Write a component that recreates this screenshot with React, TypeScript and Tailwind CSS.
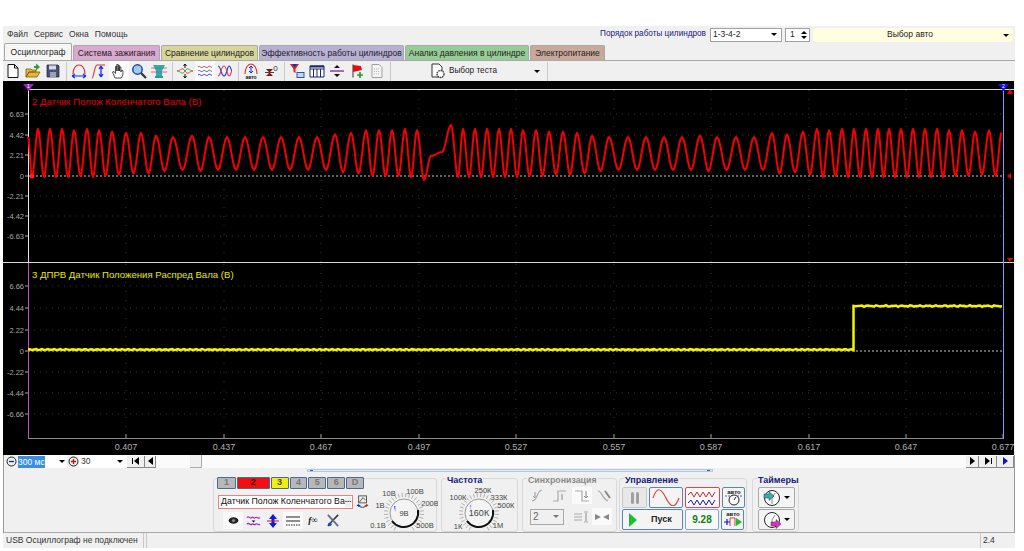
import type { ReactNode } from "react";

const peaks = [38, 50, 62, 74, 87, 99, 112, 126, 141, 156, 173, 192, 209, 227, 245, 263, 281, 299, 317, 335, 351, 366, 379, 392, 405, 417];
const peaks2 = [463, 475, 487, 499, 511, 523, 536, 549, 563, 577, 592, 609, 628, 646, 664, 682, 700, 717, 736, 754, 772, 787, 803, 817, 829, 842, 854, 866, 878, 889, 901, 913, 925, 937, 949, 962, 975, 989, 1002];

const clamp = (v: number) => Math.min(1, Math.max(0, v));

function extremes(list: number[]) {
  const out: [number, number][] = [];
  list.forEach((x, i) => {
    const next = list[i + 1] ?? x + 13;
    const s = clamp((next - x - 12) / 6);
    out.push([x, 129 + s * 8]);
    if (i < list.length - 1) out.push([(x + next) / 2, 177 - s * 7]);
  });
  return out;
}

function redWave() {
  const ext: [number, number][] = [
    [28, 137],
    [32, 177],
    ...extremes(peaks),
    [424, 180],
    [431, 156],
    [442, 152],
    [451, 125],
    [458, 177],
    ...extremes(peaks2),
  ];
  const pts: string[] = [];
  for (let i = 0; i < ext.length - 1; i++) {
    const [x0, y0] = ext[i];
    const [x1, y1] = ext[i + 1];
    for (let k = 0; k < 6; k++) {
      const t = k / 6;
      const y = y0 + (y1 - y0) * (1 - Math.cos(Math.PI * t)) / 2;
      pts.push(`${(x0 + (x1 - x0) * t).toFixed(1)},${y.toFixed(1)}`);
    }
  }
  pts.push("1002,134");
  return pts.join(" ");
}

function yellowWave() {
  const pts: string[] = [];
  for (let x = 28; x <= 853; x += 2) {
    pts.push(`${x},${349.6 + Math.sin(x * 7.3) * 0.5}`);
  }
  pts.push("853.5,350", "853.5,306");
  for (let x = 856; x <= 1002; x += 2) {
    pts.push(`${x},${306 + Math.sin(x * 3.7) * Math.sin(x * 1.3) * 0.9}`);
  }
  return pts.join(" ");
}

const xTicks = [
  [126, "0.407"],
  [224, "0.437"],
  [321, "0.467"],
  [419, "0.497"],
  [516, "0.527"],
  [614, "0.557"],
  [711, "0.587"],
  [809, "0.617"],
  [906, "0.647"],
  [1003, "0.677"],
] as const;

const redTicks = [
  [114, "6.63"],
  [135, "4.42"],
  [155, "2.21"],
  [176, "0"],
  [196, "-2.21"],
  [216, "-4.42"],
  [236, "-6.63"],
] as const;

const yellowTicks = [
  [286, "6.66"],
  [308, "4.44"],
  [330, "2.22"],
  [351, "0"],
  [372, "-2.22"],
  [393, "-4.44"],
  [414, "-6.66"],
] as const;

const Chart = () => (
  <svg width="1011" height="374" viewBox="3 81 1011 374" className="block bg-black shrink-0">
    {/* grid */}
    {xTicks.map(([x]) => (
      <g key={x}>
        <line x1={x} x2={x} y1="90" y2="262" stroke="#3a3a20" strokeDasharray="1 8" />
        <line x1={x} x2={x} y1="264" y2="438" stroke="#3a3a20" strokeDasharray="1 8" />
        <line x1={x} x2={x} y1="434" y2="438" stroke="#999" />
      </g>
    ))}
    {[...redTicks, ...yellowTicks].map(([y, t]) => (
      <g key={`${y}`}>
        {t !== "0" && <line x1="28" x2="1003" y1={y} y2={y} stroke="#3a3a20" strokeDasharray="1 5" />}
        <line x1="25" x2="28" y1={y} y2={y} stroke="#aaa" />
        <text x="24" y={y + 3} textAnchor="end" fontSize="7.5" fill="#a8a8a8">{t}</text>
      </g>
    ))}
    <line x1="28" x2="1003" y1="176" y2="176" stroke="#c8c8c8" strokeDasharray="2 2" />
    <line x1="28" x2="1003" y1="351" y2="351" stroke="#c8c8c8" strokeDasharray="2 2" />
    {/* frames */}
    <line x1="28" x2="1014" y1="89.5" y2="89.5" stroke="#d8d8d8" />
    <line x1="3" x2="1014" y1="262.5" y2="262.5" stroke="#d8d8d8" />
    <line x1="28" x2="1003" y1="438.5" y2="438.5" stroke="#8c8c8c" />
    <line x1="28.5" x2="28.5" y1="89" y2="263" stroke="#e8e8e8" />
    <line x1="28.5" x2="28.5" y1="263" y2="439" stroke="#c050c0" />
    <line x1="1003.5" x2="1003.5" y1="89" y2="439" stroke="#8f8fff" />
    <polygon points="23,84 34,84 28.5,91" fill="#a020c0" />
    <polygon points="998,84 1009,84 1003.5,91" fill="#1010f0" />
    <text x="28.5" y="88" textAnchor="middle" fontSize="5" fill="#fff">1</text>
    <text x="1003.5" y="88" textAnchor="middle" fontSize="5" fill="#fff">2</text>
    <polygon points="1007,94 1013,94 1010,89" fill="#f00000" />
    <polygon points="1007,258 1013,258 1010,262" fill="#f00000" />
    {/* traces */}
    <polyline points={redWave()} fill="none" stroke="#f40000" strokeWidth="2" strokeLinejoin="round" />
    <polyline points={yellowWave()} fill="none" stroke="#f6f200" strokeWidth="2.5" />
    <circle cx="32" cy="176" r="2.5" fill="#ff2020" />
    <polygon points="1007,176 1011,173 1011,179" fill="#f00000" />
    <text x="32" y="105" fontSize="9.6" fill="#e80000">2 Датчик Полож Коленчатого Вала (В)</text>
    <text x="32" y="278" fontSize="9.6" fill="#e8e800">3 ДПРВ Датчик Положения Распред Вала (В)</text>
    {xTicks.map(([x, t]) => (
      <text key={t} x={x} y="450" textAnchor="middle" fontSize="9" fill="#b0b0b0">{t}</text>
    ))}
  </svg>
);

const Ico = ({ children, size = 16 }: { children: ReactNode; size?: number }) => (
  <svg width={size} height={size} viewBox="0 0 16 16" className="block">
    {children}
  </svg>
);

const ToolBtn = ({ children, on }: { children: ReactNode; on?: boolean }) => (
  <div className={`w-[20px] h-[20px] flex items-center justify-center ${on ? "bg-[#fafafa]" : ""}`}>
    {children}
  </div>
);

const Sep = () => <div className="w-px h-[19px] mx-[2.5px] bg-[#c8c8c8]" />;

const Arrow = () => <div className="w-0 h-0 border-l-[3px] border-r-[3px] border-t-[3px] border-l-transparent border-r-transparent border-t-black" />;

const Toolbar = () => (
  <div className="h-[21px] flex items-center border-t border-[#a8a8a8]">
    <ToolBtn><Ico><path d="M3 1.5h6.5l3.5 3.5v9.5H3z M9.5 1.5V5H13" fill="#fff" stroke="#111" /></Ico></ToolBtn>
    <ToolBtn><Ico><path d="M1 14V6h5l1 1h4v2H4l-3 5zM1 14l3-5h11l-3 5z" fill="#e8b830" stroke="#7a5a10" strokeWidth=".8" /><path d="M9 6V3h2V0.5L15 4l-4 3.5V5H9z" fill="#2ca02c" /></Ico></ToolBtn>
    <ToolBtn><Ico><path d="M2 2h11l1 1v11H2z" fill="#46507a" stroke="#222" strokeWidth=".7" /><rect x="4" y="2.5" width="7" height="4" fill="#d8d8e8" /><rect x="5" y="9" width="6" height="5" fill="#9aa0b8" /></Ico></ToolBtn>
    <Sep />
    <ToolBtn><Ico><path d="M2 11C2 5 5 2 8 2s6 3 6 9" fill="none" stroke="#e03030" strokeWidth="1.2" /><path d="M1 13h14M1 13l3-2M1 13l3 2M15 13l-3-2M15 13l-3 2" stroke="#1030e0" strokeWidth="1.2" fill="none" /></Ico></ToolBtn>
    <ToolBtn><Ico><path d="M1 15C3 15 3 3 6 2h8" fill="none" stroke="#e03030" strokeWidth="1.1" /><path d="M10 3v11M10 3L8 6M10 3l2 3M10 14l-2-3M10 14l2-3" stroke="#1030e0" strokeWidth="1.3" fill="none" /></Ico></ToolBtn>
    <ToolBtn on><Ico><path d="M4 15L1.5 9l1.5-.5 1.5 2V3.5h1.3V8V1.5h1.4V8V2.5h1.4V8V4h1.3v5l.6-1.5h1.3c.5 2 0 5-1.4 7.5z" fill="#fff" stroke="#222" strokeWidth=".8" /></Ico></ToolBtn>
    <ToolBtn><Ico><circle cx="6.5" cy="6.5" r="4.7" fill="#a8c8e8" stroke="#1850a0" strokeWidth="1.5" /><path d="M10 10l5 5" stroke="#333" strokeWidth="2.2" /></Ico></ToolBtn>
    <ToolBtn><Ico><path d="M2 2h12l-3 6v5H5V8z" fill="#18b8b0" /><path d="M0 5h16M0 9h16" stroke="#e04060" strokeWidth=".8" /><path d="M4 14h8" stroke="#0a6a90" strokeWidth="1.5" /></Ico></ToolBtn>
    <Sep />
    <ToolBtn><Ico><path d="M0 8C4 8 5 3 8 8s4 0 8 0" fill="none" stroke="#e04040" /><path d="M0 8c4 0 5 5 8 0s4 0 8 0" fill="none" stroke="#30b030" /><path d="M8 1v4M8 11v4M6.5 3L8 1l1.500 2M6.500 13L8 15l1.500-2" stroke="#111" fill="none" /></Ico></ToolBtn>
    <ToolBtn on><Ico><path d="M1 4c2-2 3 2 5 0s3 2 5 0 3 1 4 0" fill="none" stroke="#e03030" /><path d="M1 8c2-2 3 2 5 0s3 2 5 0 3 1 4 0" fill="none" stroke="#3060d0" /><path d="M1 12c2-2 3 2 5 0s3 2 5 0 3 1 4 0" fill="none" stroke="#3030d0" /></Ico></ToolBtn>
    <ToolBtn><Ico><path d="M1 3c3 0 3 10 6 10s3-10 5-10 2 5 3 5" fill="none" stroke="#2040c0" strokeWidth="1.1" /><path d="M1 13c3 0 3-10 6-10s3 10 5 10 2-5 3-5" fill="none" stroke="#d04060" strokeWidth="1.1" /></Ico></ToolBtn>
    <Sep />
    <ToolBtn><Ico><path d="M2 11C2 5 5 1 8 1s6 4 6 10" fill="none" stroke="#e03030" strokeWidth="1.1" /><path d="M8 3v7M8 3L6 5M8 3l2 2M8 10L6 8M8 10l2-2" stroke="#1030e0" fill="none" /><text x="8" y="15.500" textAnchor="middle" fontSize="5" fontWeight="700" fill="#111">авто</text></Ico></ToolBtn>
    <ToolBtn><Ico><path d="M3 6h7l-3.500 3.500zM3 13h7L6.500 9.500z" fill="#8a1010" /><path d="M2 9.500h9" stroke="#444" /><text x="12.500" y="8" textAnchor="middle" fontSize="8" fill="#333">0</text></Ico></ToolBtn>
    <Sep />
    <ToolBtn><Ico><path d="M1 1h9L6.500 6v4L4.500 9V6z" fill="#e02020" /><path d="M3 1h5L6 4z" fill="#1030c0" /><rect x="8" y="9.500" width="7" height="5" fill="#c8d8f0" stroke="#3050c0" /></Ico></ToolBtn>
    <ToolBtn><Ico><path d="M1 3h14v11H1z M1 6h14M4.500 6v8M8 6v8M11.500 6v8" fill="#fff" stroke="#1a2a60" strokeWidth="1" /><rect x="1" y="2.500" width="14" height="2" fill="#1a2a60" /></Ico></ToolBtn>
    <ToolBtn><Ico><path d="M1 8h14" stroke="#8020a0" strokeWidth="1.3" /><path d="M5 5h6L8 2zM5 11h6l-3 3z" fill="#111" /></Ico></ToolBtn>
    <ToolBtn><Ico><path d="M4 1.500v13" stroke="#333" /><path d="M4 2l8 1 1 4-9 2z" fill="#e01010" /><path d="M11 9v6M8 12h6" stroke="#20a030" strokeWidth="1.700" /></Ico></ToolBtn>
    <ToolBtn><Ico><path d="M3 1.500h7l3 3v10H3z" fill="#f4f4f4" stroke="#a0a0a0" /><path d="M5 6h6M5 8.500h6M5 11h6" stroke="#b8b8b8" strokeDasharray="1 1" /></Ico></ToolBtn>
    <Sep />
    <div className="w-[100px] h-[20px] flex items-center ml-[37px]">
      <Ico size={16}><path d="M2 1h7l3 3v10H2z" fill="#fff" stroke="#333" /><circle cx="10.500" cy="11" r="3.500" fill="#fff" stroke="#333" strokeWidth="1.400" strokeDasharray="1.500 .8" /></Ico>
      <span className="ml-[3px] text-[8.2px] text-[#222]">Выбор теста</span>
    </div>
    <div className="w-[14px] flex justify-center"><Arrow /></div>
    <div className="w-px h-[19px] ml-[3px] bg-[#c8c8c8]" />
  </div>
);

const Select = ({ children, w, className = "" }: { children: ReactNode; w: string; className?: string }) => (
  <div className={`${w} ${className} h-[14px] flex items-center justify-between px-[2px] bg-white border border-[#a0a0a0] text-[8.5px] text-[#222]`}>
    {children}
  </div>
);

const TopBar = () => (
  <div className="h-[17px] flex items-center text-[8.5px] text-[#333]">
    <div className="flex gap-[6px] ml-[4px] w-[593px]">
      <span>Файл</span>
      <span>Сервис</span>
      <span>Окна</span>
      <span>Помощь</span>
    </div>
    <span className="w-[110px] text-[#1a1a80] text-[8.2px] whitespace-nowrap">Порядок работы цилиндров</span>
    <Select w="w-[72px]">
      <span>1-3-4-2</span>
      <span className="mr-[2px]"><Arrow /></span>
    </Select>
    <Select w="w-[25px]" className="ml-[3px]">
      <span className="ml-[2px]">1</span>
      <span className="flex flex-col gap-[2px]">
        <span className="w-0 h-0 border-l-[3px] border-r-[3px] border-b-[3px] border-l-transparent border-r-transparent border-b-black" />
        <Arrow />
      </span>
    </Select>
    <div className="ml-[3px] w-[200px] h-[14px] pr-[6px] bg-[#ffffe0] rounded-sm flex items-center relative justify-center text-[#222]">
      <span>Выбор авто</span>
      <span className="absolute right-[4px] top-[6px]"><Arrow /></span>
    </div>
  </div>
);

const tabs = [
  ["Система зажигания", "w-[87px]", "bg-[#d9a9cf]"],
  ["Сравнение цилиндров", "w-[97px]", "bg-[#d6d69a]"],
  ["Эффективность работы цилиндров", "w-[145px]", "bg-[#b7b0d3]"],
  ["Анализ давления в цилиндре", "w-[124px]", "bg-[#96cc96]"],
  ["Электропитание", "w-[75px]", "bg-[#c9a999]"],
];

const Tabs = () => (
  <div className="h-[17px] flex items-end pl-px gap-px text-[8.5px] text-[#222]">
    <div className="w-[68px] h-[17px] bg-[#f6f6f6] border border-b-0 border-[#a8a8a8] rounded-t-[2px] flex items-center justify-center">Осциллограф</div>
    {tabs.map(([t, w, c]) => (
      <div key={t} className={`${w} ${c} h-[15px] border border-b-0 border-[#a8a8a8] rounded-t-[2px] flex items-center justify-center whitespace-nowrap`}>{t}</div>
    ))}
  </div>
);

const SBtn = ({ w, children }: { w: string; children: ReactNode }) => (
  <div className={`${w} h-[12px] flex items-center justify-center bg-[#f0f0f0] border-r border-b border-[#888]`}>{children}</div>
);

const TriR = ({ c = "#000" }: { c?: string }) => (
  <svg width="7" height="8" viewBox="0 0 7 8"><path d="M1 0l5 4-5 4z" fill={c} /></svg>
);
const TriL = () => (
  <svg width="7" height="8" viewBox="0 0 7 8"><path d="M6 0L1 4l5 4z" fill="#000" /></svg>
);

const ZoomBtn = ({ plus }: { plus?: boolean }) => (
  <svg width="11" height="11" viewBox="0 0 11 11" className="block">
    <circle cx="5.500" cy="5.500" r="4.500" fill="#eee" stroke="#222" />
    <path d={plus ? "M3 5.500h5M5.500 3v5" : "M3 5.500h5"} stroke={plus ? "#c01010" : "#1030a0"} strokeWidth="1.300" />
  </svg>
);

const ScrollRow = () => (
  <div className="h-[13px] flex items-center text-[8.5px] text-[#333] bg-[#fbfbfb]">
    <div className="w-[14px] h-[13px] flex items-center justify-center bg-[#f0f0f0]"><ZoomBtn /></div>
    <div className="w-[27px] h-[13px] bg-white flex items-center"><span className="bg-[#3a8ee0] text-white w-[27px] leading-[12px] whitespace-nowrap overflow-hidden">300 мс</span></div>
    <div className="w-[22px] h-[13px] bg-white flex items-center justify-end pr-[2px]"><Arrow /></div>
    <div className="w-[12px] h-[13px] flex items-center justify-center bg-[#f0f0f0]"><ZoomBtn plus /></div>
    <div className="w-[48px] h-[13px] bg-white flex items-center justify-between pl-[2px] pr-[4px]"><span>30</span><Arrow /></div>
    <SBtn w="w-[18px]"><span className="w-px h-[6px] bg-black" /><TriL /></SBtn>
    <SBtn w="w-[11px]"><TriL /></SBtn>
    <div className="w-[34px]" />
    <div className="w-[12px] h-[13px] bg-[#f0f0f0] border-r border-b border-[#aaa]" />
    <div className="flex-1" />
    <SBtn w="w-[13px]"><TriR /></SBtn>
    <SBtn w="w-[18px]"><TriR /><span className="w-px h-[6px] bg-black" /></SBtn>
    <SBtn w="w-[17px]"><TriR c="#1010e0" /></SBtn>
  </div>
);

function Knob({ cx, cy, pointer, children }: { cx: number; cy: number; pointer: number; children: ReactNode }) {
  const ticks = Array.from({ length: 28 }, (_, i) => (i * 300) / 27 + 120);
  const p = (pointer * Math.PI) / 180;
  return (
    <svg width="74" height="50" viewBox="0 0 74 50" className="block">
      {ticks.map((a) => {
        const r = (a * Math.PI) / 180;
        return (
          <line key={a} x1={cx + Math.cos(r) * 16} y1={cy + Math.sin(r) * 16} x2={cx + Math.cos(r) * 20} y2={cy + Math.sin(r) * 20} stroke="#b0b0b0" />
        );
      })}
      <circle cx={cx} cy={cy} r="14" fill="#f4f4f4" stroke="#999" />
      <path d={`M${cx - 12} ${cy + 8}A14.500 14.500 0 0 0 ${cx + 14} ${cy - 3}`} fill="none" stroke="#111" strokeWidth="2" />
      <polygon points={`${cx + Math.cos(p) * 12},${cy + Math.sin(p) * 12} ${cx + Math.cos(p) * 7 - 3},${cy + Math.sin(p) * 7 - 3} ${cx + Math.cos(p) * 7 - 3},${cy + Math.sin(p) * 7 + 3}`} fill="#1010e0" />
      {children}
    </svg>
  );
}

const chans: [string, string][] = [
  ["1", "w-[20px] bg-[#b8b8b8] text-[#777]"],
  ["2", "w-[35px] bg-[#f01010] text-[#300]"],
  ["3", "w-[19px] bg-[#f0f010] text-[#443]"],
  ["4", "w-[19px] bg-[#b8b8b8] text-[#777]"],
  ["5", "w-[19px] bg-[#b8b8b8] text-[#777]"],
  ["6", "w-[19px] bg-[#b8b8b8] text-[#777]"],
  ["D", "w-[19px] bg-[#b8b8b8] text-[#777]"],
];

const Panel = ({ w, title, gray, children }: { w: string; title?: string; gray?: boolean; children: ReactNode }) => (
  <div className={`${w} h-[54px] relative border border-[#d8d8d8] rounded-[3px]`}>
    {title && (
      <span className={`absolute left-[4px] top-[-4px] px-px bg-[#f0f0f0] leading-[10px] font-bold whitespace-nowrap ${gray ? "text-[8.8px] text-[#8a8a8a]" : "text-[9px] text-[#16207a]"}`}>{title}</span>
    )}
    {children}
  </div>
);

const Btn = ({ w, className = "", children }: { w: string; className?: string; children: ReactNode }) => (
  <div className={`${w} h-[21px] flex items-center justify-center rounded-[2px] border ${className || "border-[#5a86b0] bg-[#f4f4f4]"}`}>{children}</div>
);

const Sm = ({ children, on }: { children: ReactNode; on?: boolean }) => (
  <div className={`w-[20px] h-[17px] flex items-center justify-center ${on ? "bg-[#fafafa]" : ""}`}>{children}</div>
);

const ChannelPanel = () => (
  <Panel w="w-[224px]">
    <div className="flex h-full">
      <div className="w-[150px] pl-[3px] mt-[-2px]">
        <div className="flex gap-px">
          {chans.map(([t, c]) => (
            <div key={t} className={`${c} h-[12px] border border-[#4a6a90] rounded-[1px] flex items-center justify-center text-[9px] font-bold`}>{t}</div>
          ))}
        </div>
        <div className="flex items-center mt-[6px] w-[154px]">
          <div className="w-[135px] h-[14px] ml-[1px] flex items-center bg-white border border-[#f08080] text-[8.800px] text-[#111] pl-[2px] whitespace-nowrap justify-between">
            <span>Датчик Полож Коленчатого Ва</span>
            <span className="w-[14px] h-[10px] mr-px bg-[#eee] text-[8px] leading-[6px] text-center font-bold">...</span>
          </div>
          <div className="ml-[3px]">
            <Ico size={14}><rect x="3" y="1" width="9" height="8" fill="#eee" stroke="#444" /><path d="M4 8l4-5 3 3" stroke="#444" fill="none" /><path d="M2 11c2 4 9 4 11 0" stroke="#222" fill="none" /><path d="M1 12h4M3 10.500v3" stroke="#1010e0" /><path d="M10 12h4M12 10.500v3" stroke="#e01010" /></Ico>
          </div>
        </div>
        <div className="flex items-center mt-[3px] ml-[6px]">
          <Sm on><Ico size={13}><ellipse cx="8" cy="8" rx="6" ry="4" fill="#222" /><circle cx="8" cy="8" r="2" fill="#888" /></Ico></Sm>
          <Sm><Ico size={15}><path d="M1 5c2-3 3 2 5 0s2 2 4 0 3 2 5 0" fill="none" stroke="#a020c0" strokeWidth="1.200" /><path d="M1 12c2-3 3 2 5 0s2 2 4 0 3 2 5 0" fill="none" stroke="#a020c0" strokeWidth="1.200" /><path d="M6 8h4l-2 2z" fill="#111" /></Ico></Sm>
          <Sm><Ico size={16}><path d="M8 1L4 6h2.500v4H4l4 5 4-5H9.500V6H12z" fill="#1818d0" /><path d="M2 8h12" stroke="#c01060" /></Ico></Sm>
          <Sm on><Ico size={16}><path d="M1 4h14M1 8h14" stroke="#222" /><path d="M1 12h14" stroke="#222" strokeDasharray="1.500 1" /></Ico></Sm>
          <Sm><span className="font-['Liberation_Serif',serif] italic font-bold text-[9px] text-[#111]">f∞</span></Sm>
          <Sm><Ico size={15}><path d="M2 14l6-7M13 2L6 9" stroke="#333" strokeWidth="1.600" /><path d="M2 2l11 12" stroke="#607090" strokeWidth="2" /><circle cx="4" cy="12" r="2" fill="#2050a0" /></Ico></Sm>
        </div>
      </div>
      <div className="ml-auto mt-[3px] mr-[-1px]">
        <Knob cx={40} cy={31} pointer={215}>
          <g fontSize="7.500" fill="#444" textAnchor="middle">
            <text x="25" y="14">10В</text>
            <text x="51" y="12">100В</text>
            <text x="16" y="26">1В</text>
            <text x="66" y="24">200В</text>
            <text x="14" y="46">0.1В</text>
            <text x="61" y="46">500В</text>
            <text x="40" y="34">9В</text>
          </g>
        </Knob>
      </div>
    </div>
  </Panel>
);

const FreqPanel = () => (
  <Panel w="w-[77px]" title="Частота">
    <div className="ml-[1px] mt-[3px]">
      <Knob cx={36} cy={31} pointer={225}>
        <g fontSize="7.500" fill="#444" textAnchor="middle">
          <text x="40" y="11">250К</text>
          <text x="15" y="18">100К</text>
          <text x="56" y="18">333К</text>
          <text x="63" y="26">500К</text>
          <text x="15" y="47">1К</text>
          <text x="55" y="46">1М</text>
          <text x="36" y="34" fontSize="9">160К</text>
        </g>
      </Knob>
    </div>
  </Panel>
);

const SyncPanel = () => (
  <Panel w="w-[95px]" title="Синхронизация" gray>
    <div className="flex gap-[2px] ml-[5px] mt-[8px]">
      <Sm><Ico><path d="M2 13c6 0 4-10 10-11" fill="none" stroke="#aaa" strokeWidth="1.200" /><path d="M5 4v6l-2-2" stroke="#999" fill="none" /></Ico></Sm>
      <Sm><Ico><path d="M1 13h5V3h8" fill="none" stroke="#aaa" strokeWidth="1.200" /><path d="M10 6v6" stroke="#888" /></Ico></Sm>
      <Sm on><Ico><path d="M1 3h7v10h7" fill="none" stroke="#aaa" strokeWidth="1.200" /><path d="M12 3v7l-2-2M12 10l2-2" stroke="#888" fill="none" /></Ico></Sm>
      <Sm><Ico><path d="M2 3c4 0 4 8 10 10" fill="none" stroke="#aaa" strokeWidth="1.200" /><path d="M9 3l5 7" stroke="#888" strokeWidth="2" /></Ico></Sm>
    </div>
    <div className="flex items-center ml-[7px] mt-[4px]">
      <div className="w-[34px] h-[16px] border border-[#a8a8a8] flex items-center justify-between px-[2px] text-[10px] text-[#666]">
        <span>2</span>
        <span className="mr-[2px] w-0 h-0 border-l-[3px] border-r-[3px] border-t-[3px] border-l-transparent border-r-transparent border-t-[#777]" />
      </div>
      <div className="flex ml-[7px] gap-px">
        <Sm><Ico><path d="M1 5h8M1 8h8M1 11h8M11 3h4M11 13h4" stroke="#aaa" /><path d="M13 4v8" stroke="#888" /></Ico></Sm>
        <Sm on><Ico><path d="M1 5l6 3-6 3zM15 5L9 8l6 3z" fill="#888" /></Ico></Sm>
      </div>
    </div>
  </Panel>
);

const Sine = () => (
  <svg width="28" height="17" viewBox="0 0 28 17"><path d="M1 9C5 -3 9 -1 14 9s9 11 13 0" fill="none" stroke="#e04040" strokeWidth="1.200" /></svg>
);

const AutoIcon = ({ second }: { second?: boolean }) => (
  <svg width="20" height="19" viewBox="0 0 20 19">
    <text x="10" y="6" textAnchor="middle" fontSize="6" fontWeight="700" fill="#222">авто</text>
    {second ? (
      <>
        <path d="M7 16V8h5v8" fill="none" stroke="#d04040" />
        <path d="M1 12h6M4 9v6" stroke="#1010e0" strokeWidth="1.200" />
        <path d="M13 8l6 4-6 4z" fill="#18c018" />
      </>
    ) : (
      <>
        <path d="M1 8h18" stroke="#3060e0" strokeDasharray="2 1" />
        <circle cx="10" cy="12" r="5" fill="#fff" stroke="#222" />
        <path d="M10 12l2-3" stroke="#222" />
      </>
    )}
  </svg>
);

const ControlPanel = () => (
  <Panel w="w-[128px]" title="Управление">
    <div className="pl-[2px] pt-[8px]">
      <div className="flex gap-[2px]">
        <Btn w="w-[25px]" className="border-[#c8c8c8] bg-[#e8e8e8]">
          <span className="flex gap-[2px]"><span className="w-[3px] h-[12px] bg-[#a0a0a0] rounded-sm" /><span className="w-[3px] h-[12px] bg-[#a0a0a0] rounded-sm" /></span>
        </Btn>
        <Btn w="w-[34px]"><Sine /></Btn>
        <Btn w="w-[35px]" className="border-[#f04040] bg-[#fafafa]">
          <svg width="31" height="18" viewBox="0 0 31 18"><path d="M1 6l3-3 3 5 3-5 3 5 3-5 3 5 3-5 3 5 3-5" fill="none" stroke="#e02020" /><path d="M1 14l3-3 3 5 3-5 3 5 3-5 3 5 3-5 3 5 3-5" fill="none" stroke="#1010e0" /></svg>
        </Btn>
        <Btn w="w-[23px]"><AutoIcon /></Btn>
      </div>
      <div className="flex gap-[2px] mt-[1px]">
        <Btn w="w-[61px]" className="border-[#5a86b0] bg-[#f4f4f4] justify-start">
          <span className="flex items-center w-full pl-[6px]">
            <span className="w-0 h-0 border-t-[7px] border-b-[7px] border-l-[8px] border-t-transparent border-b-transparent border-l-[#18c030]" />
            <span className="ml-[14px] text-[9px] font-bold text-[#222]">Пуск</span>
          </span>
        </Btn>
        <Btn w="w-[34px]" className="border-[#7aa8d8] bg-[#f8f8f8]"><span className="text-[10px] font-bold text-[#108010]">9.28</span></Btn>
        <Btn w="w-[23px]"><AutoIcon second /></Btn>
      </div>
    </div>
  </Panel>
);

const Clock = ({ color, left }: { color: string; left?: boolean }) => (
  <svg width="18" height="18" viewBox="0 0 18 18">
    <circle cx="9" cy="9" r="7.500" fill="#fff" stroke="#222" />
    <path d="M9 9l3-5M9 9v6" stroke="#888" />
    {left ? <path d="M1 5h5V2.500L11 7l-5 4.500V9H1z" fill={color} stroke="#333" strokeWidth=".5" /> : <path d="M8 11h5V8.500l5 4.500-5 4.500V15H8z" fill={color} stroke="#333" strokeWidth=".5" />}
  </svg>
);

const TimerPanel = () => (
  <Panel w="w-[47px]" title="Таймеры">
    <div className="pl-[5px] pt-[8px] flex flex-col gap-[1px]">
      <div className="w-[37px] h-[21px] flex items-center justify-center gap-[3px] bg-[#f4f4f4] border border-[#aaa] rounded-[2px]"><Clock color="#30b0b0" left /><Arrow /></div>
      <div className="w-[37px] h-[21px] flex items-center justify-center gap-[3px] bg-[#f4f4f4] border border-[#aaa] rounded-[2px]"><Clock color="#e030c0" /><Arrow /></div>
    </div>
  </Panel>
);

const App = () => (
  <div className="w-[1024px] h-[551px] bg-white font-['Liberation_Sans',sans-serif] overflow-hidden">
    <div className="h-[26px]" />
    <div className="ml-[3px] w-[1012px] bg-[#f0f0f0] h-[522px] flex flex-col">
      <TopBar />
      <Tabs />
      <Toolbar />
      <Chart />
      <div className="border-x border-[#9a9a9a] flex flex-col">
        <ScrollRow />
        <div className="h-[65px] relative flex pl-[209px] pt-[10px] gap-[4px] border-b border-[#a8a8a8]">
          {/* thin channel slider */}
          <div className="absolute left-[303px] top-[1px] w-[406px] h-[3px] bg-[#dfe8f4] border border-[#b8c8dc] flex justify-between px-[2px]">
            <span className="w-[3px] h-px bg-[#3060d0]" />
            <span className="w-[3px] h-px bg-[#3060d0]" />
          </div>
          <ChannelPanel />
          <FreqPanel />
          <SyncPanel />
          <div className="ml-[-2px]"><ControlPanel /></div>
          <div className="ml-px"><TimerPanel /></div>
        </div>
      </div>
      <div className="h-[15px] flex items-center text-[8.5px] text-[#333]">
        <div className="w-[141px] pl-[3px] border-r border-[#c8c8c8] h-full flex items-center whitespace-nowrap">USB Осциллограф не подключен</div>
        <div className="flex-1 ml-[2px] h-full border-l border-[#c8c8c8]" />
        <div className="w-[35px] h-full border-l border-[#c8c8c8] pl-[2px] flex items-center">2.4</div>
      </div>
    </div>
  </div>
);

export default App;
